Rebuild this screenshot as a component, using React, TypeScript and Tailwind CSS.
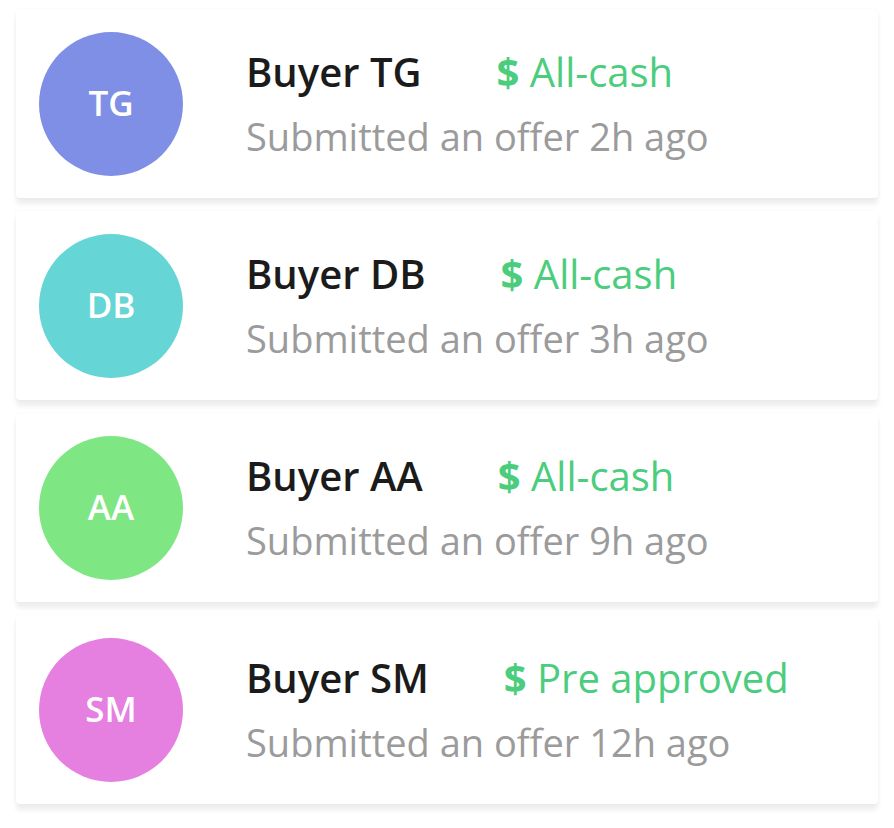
const offers = [
  { initials: "TG", name: "Buyer TG", status: "All-cash", time: "2h", color: "bg-[#7f8fe6]" },
  { initials: "DB", name: "Buyer DB", status: "All-cash", time: "3h", color: "bg-[#66d5d5]" },
  { initials: "AA", name: "Buyer AA", status: "All-cash", time: "9h", color: "bg-[#7fe684]" },
  { initials: "SM", name: "Buyer SM", status: "Pre approved", time: "12h", color: "bg-[#e580e1]" },
];

export default function App() {
  return (
    <div className="min-h-screen bg-white px-4 pt-[9px] font-['Open_Sans',sans-serif]">
      <div className="flex w-[862px] flex-col gap-[13px]">
        {offers.map((o) => (
          <div
            key={o.initials}
            className="flex h-[189px] items-center rounded-sm bg-white pl-[23px] shadow-[0_6px_5px_rgba(0,0,0,0.07),0_0_3px_rgba(0,0,0,0.04)]"
          >
            <div
              className={`flex h-[144px] w-[144px] shrink-0 items-center justify-center rounded-full ${o.color}`}
            >
              <span className="text-[35px] font-semibold text-white">{o.initials}</span>
            </div>
            <div className="ml-[63px] flex flex-col">
              <div className="flex items-baseline text-[40px] leading-[48px]">
                <span className="font-semibold text-[#1b1b1b]">{o.name}</span>
                <span className="ml-[75px] text-[#4bcd7d]">
                  <span className="font-bold">$</span> {o.status}
                </span>
              </div>
              <p className="mt-[16px] text-[38px] leading-[48px] text-[#9b9b9b]">
                Submitted an offer {o.time} ago
              </p>
            </div>
          </div>
        ))}
      </div>
    </div>
  );
}
